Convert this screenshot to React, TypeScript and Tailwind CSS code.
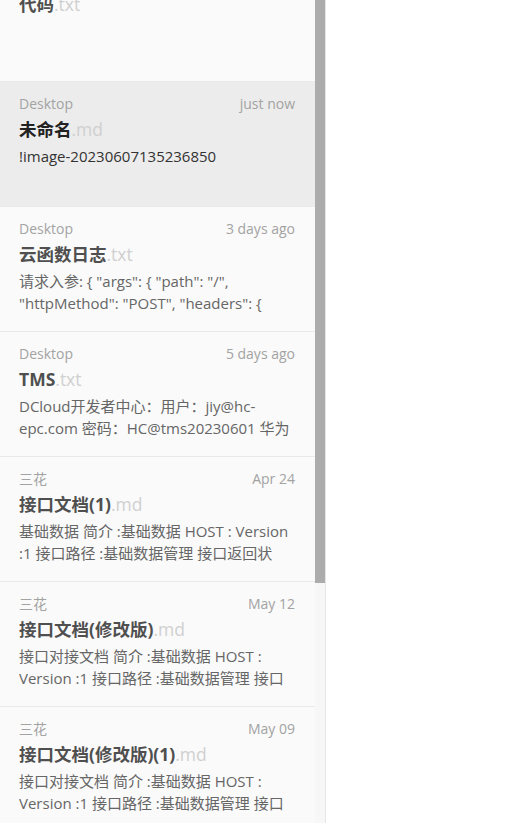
import React from 'react';

interface FileItem {
  folder: string,
  time: string,
  name: string,
  ext: string,
  preview: string,
  active?: boolean,
}

const files: FileItem[] = [
  { folder: '', time: '', name: '代码', ext: '.txt', preview: '' },
  { folder: 'Desktop', time: 'just now', name: '未命名', ext: '.md', preview: '!image-20230607135236850', active: true },
  { folder: 'Desktop', time: '3 days ago', name: '云函数日志', ext: '.txt', preview: '请求入参: { "args": { "path": "/", "httpMethod": "POST", "headers": {' },
  { folder: 'Desktop', time: '5 days ago', name: 'TMS', ext: '.txt', preview: 'DCloud开发者中心：用户：jiy@hc-epc.com 密码：HC@tms20230601 华为' },
  { folder: '三花', time: 'Apr 24', name: '接口文档(1)', ext: '.md', preview: '基础数据 简介 :基础数据 HOST : Version :1 接口路径 :基础数据管理 接口返回状' },
  { folder: '三花', time: 'May 12', name: '接口文档(修改版)', ext: '.md', preview: '接口对接文档 简介 :基础数据 HOST : Version :1 接口路径 :基础数据管理 接口' },
  { folder: '三花', time: 'May 09', name: '接口文档(修改版)(1)', ext: '.md', preview: '接口对接文档 简介 :基础数据 HOST : Version :1 接口路径 :基础数据管理 接口' },
];

const FileRow: React.FC<{ item: FileItem }> = ({ item }) => {
  return (
    <div className={`h-[125px] shrink-0 border-b border-[#e9e9e9] pl-[19px] pr-[13px] pt-[12px] ${item.active ? 'bg-[#ececec]' : ''}`}>
      <div className="flex justify-between h-5 leading-5 text-[14px] text-[#a3a3a3] pr-[7px]">
        <span>{item.folder}</span>
        <span>{item.time}</span>
      </div>
      <div className="mt-[2px] leading-[26px] text-[17.5px] whitespace-nowrap">
        <span className={`font-bold ${item.active ? 'text-[#222222]' : 'text-[#4f4f4f]'}`}>{item.name}</span>
        <span className="text-[#d0d0d0]">{item.ext}</span>
      </div>
      <p className={`mt-[3px] text-[15px] leading-[22px] line-clamp-2 ${item.active ? 'text-[#333333]' : 'text-[#666666]'}`}>
        {item.preview}
      </p>
    </div>
  );
};

const App: React.FC = () => {
  return (
    <div className="w-[512px] h-[823px] flex bg-white overflow-hidden" style={{ fontFamily: '"Open Sans", "Noto Sans CJK SC", sans-serif' }}>
      <div className="w-[326px] h-full flex bg-[#fafafa] border-r border-[#e6e6e6]">
        <div className="w-[315px] h-full overflow-hidden">
          <div className="-mt-[43px] flex flex-col">
            {files.map((f, i) => <FileRow key={i} item={f} />)}
          </div>
        </div>
        <div className="w-[10px] h-full flex flex-col bg-[#f7f7f7]">
          <div className="h-[583px] bg-[#acacac]"></div>
        </div>
      </div>
      <div className="flex-1"></div>
    </div>
  );
};

export default App;
